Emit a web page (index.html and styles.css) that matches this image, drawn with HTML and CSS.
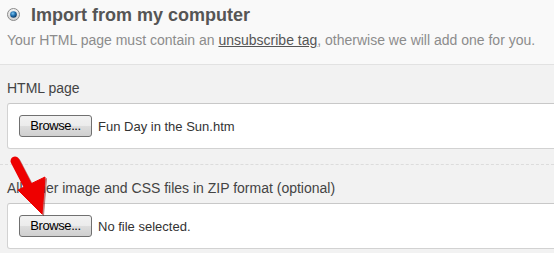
FILE: index.html
```html
<!DOCTYPE html>
<html>
<head>
<meta charset="utf-8">
<link rel="stylesheet" href="styles.css">
</head>
<body>
<div class="page">
  <header class="intro">
    <div class="title-row">
      <svg class="radio" width="13" height="13" viewBox="0 0 13 13">
        <defs>
          <radialGradient id="rg" cx="0.4" cy="0.35" r="0.7">
            <stop offset="0" stop-color="#7fc6f0"/>
            <stop offset="0.5" stop-color="#1f6fb0"/>
            <stop offset="1" stop-color="#0b2f55"/>
          </radialGradient>
          <linearGradient id="ring" x1="0" y1="0" x2="0" y2="1">
            <stop offset="0" stop-color="#f4f4f4"/>
            <stop offset="1" stop-color="#d2d2d2"/>
          </linearGradient>
        </defs>
        <circle cx="6.5" cy="6.5" r="6" fill="url(#ring)" stroke="#8a8a8a" stroke-width="1"/>
        <circle cx="6.5" cy="6.5" r="3.3" fill="url(#rg)"/>
      </svg>
      <h1 class="title">Import from my computer</h1>
    </div>
    <p class="note">Your HTML page must contain an <a class="link" href="#">unsubscribe tag</a>, otherwise we will add one for you.</p>
  </header>
  <section class="form">
    <div class="field">
      <div class="label">HTML page</div>
      <div class="filebox">
        <span class="browse">Browse...</span>
        <span class="filename">Fun Day in the Sun.htm</span>
      </div>
    </div>
    <div class="divider"></div>
    <div class="field">
      <div class="label">All other image and CSS files in ZIP format (optional)</div>
      <div class="filebox">
        <span class="browse">Browse...</span>
        <span class="filename">No file selected.</span>
      </div>
    </div>
    <svg class="arrow" width="60" height="70" viewBox="0 150 60 70">
      <g transform="translate(1.5,1.5)" fill="#8a0000" stroke="#8a0000" opacity="0.5">
        <line x1="15" y1="162" x2="29" y2="189" stroke-width="9" stroke-linecap="round"/>
        <polygon points="18,191 45,178 42,215" stroke-width="1" stroke-linejoin="round"/>
      </g>
      <g fill="#ee0000" stroke="#ee0000">
        <line x1="15" y1="162" x2="29" y2="189" stroke-width="9" stroke-linecap="round"/>
        <polygon points="18,191 45,178 42,215" stroke-width="1" stroke-linejoin="round"/>
      </g>
    </svg>
  </section>
</div>
</body>
</html>
```

FILE: styles.css
```css
html, body {
  margin: 0;
  padding: 0;
}
body {
  width: 554px;
  height: 253px;
  overflow: hidden;
  background: #f2f2f2;
  font-family: "Liberation Sans", Arial, sans-serif;
}
.page {
  position: relative;
}
.intro {
  background: #f9f9f9;
  border-bottom: 1px solid #e2e2e2;
  height: 65px;
  box-sizing: border-box;
  padding: 3px 7px 0 7px;
}
.title-row {
  display: flex;
  align-items: center;
  gap: 11px;
  height: 24px;
}
.radio {
  flex: none;
  margin-top: -1px;
}
.title {
  margin: 0;
  font-size: 18px;
  line-height: 24px;
  font-weight: bold;
  color: #555555;
}
.note {
  margin: 4px 0 0 0;
  font-size: 14px;
  line-height: 18px;
  color: #8c8c8c;
  white-space: nowrap;
}
.link {
  color: #555555;
  text-decoration: underline;
}
.form {
  position: relative;
  padding-top: 15px;
  overflow: hidden;
}
.field {
  padding-left: 7px;
}
.label {
  font-size: 14px;
  line-height: 17px;
  color: #444444;
  white-space: nowrap;
}
.filebox {
  margin-top: 6px;
  margin-right: -10px;
  height: 44px;
  background: #ffffff;
  border: 1px solid #d2d2d2;
  border-top-color: #c8c8c8;
  border-radius: 3px;
  display: flex;
  align-items: center;
  padding-left: 11px;
}
.browse {
  box-sizing: border-box;
  width: 73px;
  height: 22px;
  border: 1px solid #707070;
  border-radius: 3px;
  background: linear-gradient(#f2f2f2, #ebebeb 50%, #dddddd 51%, #cfcfcf);
  font-size: 13px;
  line-height: 20px;
  color: #000;
  text-align: center;
  letter-spacing: -0.4px;
}
.filename {
  margin-left: 6px;
  font-size: 13px;
  color: #333;
}
.divider {
  margin-top: 15px;
  border-top: 1px dashed #dcdcdc;
  margin-bottom: 15px;
}
.arrow {
  position: absolute;
  left: 0;
  top: 84px;
}
```
